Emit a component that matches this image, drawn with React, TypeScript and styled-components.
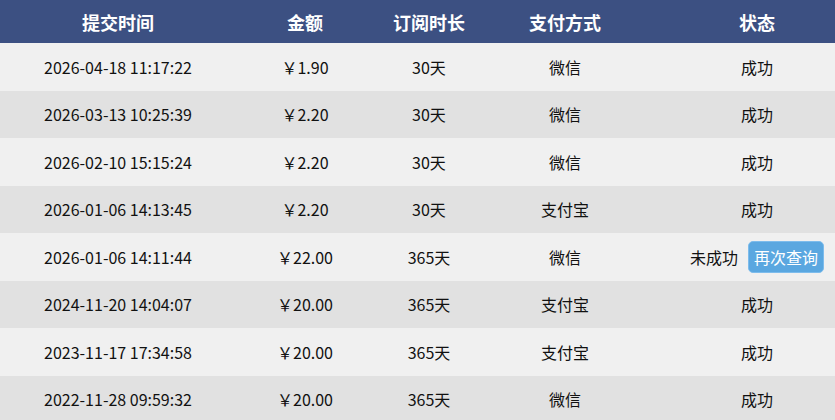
import React from "react";
import styled, { createGlobalStyle } from "styled-components";

const GlobalStyle = createGlobalStyle`
  html, body { margin: 0; padding: 0; background: #ffffff; }
  body { font-family: "Noto Sans CJK SC", "Noto Sans", sans-serif; overflow: hidden; }
`;

const Page = styled.div`
  width: 835px;
  height: 420px;
  overflow: hidden;
`;

const Table = styled.div`
  width: 868px;
  display: grid;
  grid-template-columns: 236px 138px 110px 162px 222px;
`;

const HeadCell = styled.div`
  height: 43px;
  background: #3c5082;
  color: #ffffff;
  font-size: 18px;
  font-weight: 700;
  display: flex;
  align-items: center;
  justify-content: center;
`;

const Cell = styled.div<{ $alt: boolean }>`
  height: 47.5px;
  background: ${(p) => (p.$alt ? "#e1e1e1" : "#f0f0f0")};
  color: #111111;
  font-size: 16px;
  display: flex;
  align-items: center;
  justify-content: center;
  gap: 10px;
`;

const RetryButton = styled.button`
  font-family: inherit;
  font-size: 16px;
  color: #ffffff;
  background: #5aa7e0;
  border: 1px solid #7dbcec;
  border-radius: 5px;
  width: 76px;
  height: 32px;
  padding: 0;
  display: flex;
  align-items: center;
  justify-content: center;
  cursor: pointer;
`;

type Row = { time: string; amount: string; dur: string; pay: string; ok: boolean };

const rows: Row[] = [
  { time: "2026-04-18 11:17:22", amount: "￥1.90", dur: "30天", pay: "微信", ok: true },
  { time: "2026-03-13 10:25:39", amount: "￥2.20", dur: "30天", pay: "微信", ok: true },
  { time: "2026-02-10 15:15:24", amount: "￥2.20", dur: "30天", pay: "微信", ok: true },
  { time: "2026-01-06 14:13:45", amount: "￥2.20", dur: "30天", pay: "支付宝", ok: true },
  { time: "2026-01-06 14:11:44", amount: "￥22.00", dur: "365天", pay: "微信", ok: false },
  { time: "2024-11-20 14:04:07", amount: "￥20.00", dur: "365天", pay: "支付宝", ok: true },
  { time: "2023-11-17 17:34:58", amount: "￥20.00", dur: "365天", pay: "支付宝", ok: true },
  { time: "2022-11-28 09:59:32", amount: "￥20.00", dur: "365天", pay: "微信", ok: true },
];

export default function App() {
  return (
    <Page>
      <GlobalStyle />
      <Table>
        <HeadCell>提交时间</HeadCell>
        <HeadCell>金额</HeadCell>
        <HeadCell>订阅时长</HeadCell>
        <HeadCell>支付方式</HeadCell>
        <HeadCell>状态</HeadCell>
        {rows.map((r, i) => {
          const alt = i % 2 === 1;
          return (
            <React.Fragment key={i}>
              <Cell $alt={alt}>{r.time}</Cell>
              <Cell $alt={alt}>{r.amount}</Cell>
              <Cell $alt={alt}>{r.dur}</Cell>
              <Cell $alt={alt}>{r.pay}</Cell>
              <Cell $alt={alt}>
                {r.ok ? "成功" : (
                  <>
                    <span>未成功</span>
                    <RetryButton>再次查询</RetryButton>
                  </>
                )}
              </Cell>
            </React.Fragment>
          );
        })}
      </Table>
    </Page>
  );
}
